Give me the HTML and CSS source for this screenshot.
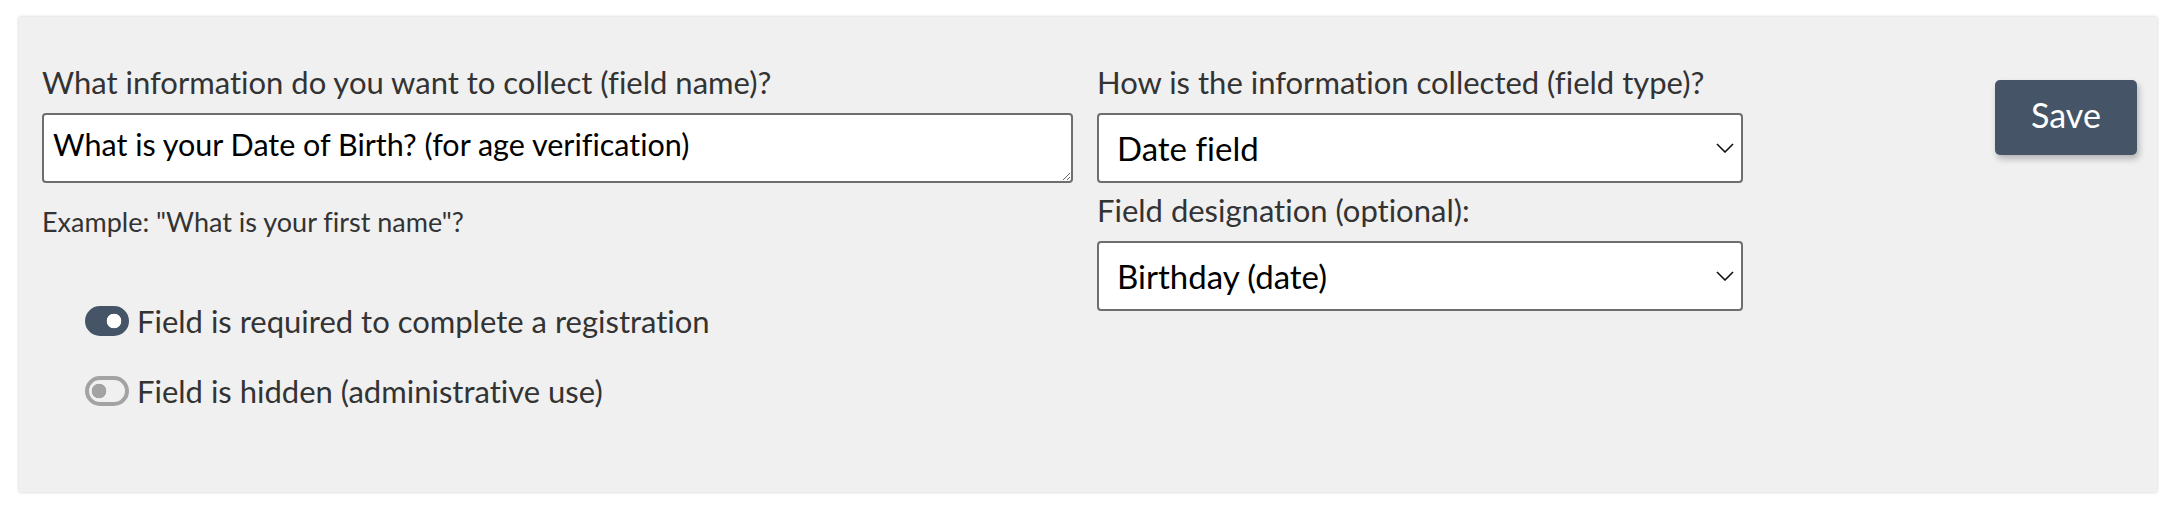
FILE: index.html
```html
<!DOCTYPE html>
<html lang="en">
<head>
    <meta charset="UTF-8">
    <meta name="viewport" content="width=device-width, initial-scale=1.0">
    <title>Registration field</title>
    <link rel="stylesheet" href="styles.css">
</head>
<body>
    <div class="page">
        <form class="field-editor">
            <div class="col col-name">
                <label class="field-label" for="field-name">What information do you want to collect (field name)?</label>
                <textarea id="field-name" class="field-input" rows="1">What is your Date of Birth? (for age verification)</textarea>
                <p class="hint">Example: "What is your first name"?</p>

                <div class="switches">
                    <label class="switch-row">
                        <input type="checkbox" class="switch" checked>
                        <span>Field is required to complete a registration</span>
                    </label>
                    <label class="switch-row">
                        <input type="checkbox" class="switch">
                        <span>Field is hidden (administrative use)</span>
                    </label>
                </div>
            </div>

            <div class="col col-type">
                <div class="group">
                    <label class="field-label" for="field-type">How is the information collected (field type)?</label>
                    <div class="select-wrap">
                        <select id="field-type" class="field-select">
                            <option>Date field</option>
                            <option>Text field</option>
                            <option>Number field</option>
                        </select>
                        <svg class="chevron" viewBox="0 0 18 10" width="18" height="10"><path d="M1 1 L9 9 L17 1"/></svg>
                    </div>
                </div>
                <div class="group">
                    <label class="field-label" for="field-designation">Field designation (optional):</label>
                    <div class="select-wrap">
                        <select id="field-designation" class="field-select">
                            <option>Birthday (date)</option>
                            <option>None</option>
                        </select>
                        <svg class="chevron" viewBox="0 0 18 10" width="18" height="10"><path d="M1 1 L9 9 L17 1"/></svg>
                    </div>
                </div>
            </div>

            <button type="button" class="save-btn">Save</button>
        </form>
    </div>
</body>
</html>
```
FILE: styles.css
```css
*, *::before, *::after {
    box-sizing: border-box;
}

body {
    margin: 0;
    background: #fff;
    color: #333;
    font-family: 'Lato', sans-serif;
    font-variant-ligatures: none;
}

.page {
    padding: 17px 17px 18px 19px;
}

/* grey card holding the whole editor row */
.field-editor {
    display: flex;
    align-items: flex-start;
    height: 475px;
    padding: 47px 20px 0 23px;
    background: #f0f0f0;
    box-shadow: 0 0 3px rgba(0, 0, 0, 0.22);
}

.col-name {
    width: 1031px;
}

.col-type {
    width: 646px;
    margin-left: 24px;
}

.field-label {
    display: block;
    margin-bottom: 12px;
    font-size: 31px;
    line-height: 1.2;
    color: #333;
}

.field-input {
    display: block;
    width: 100%;
    height: 70px;
    margin: 0;
    padding: 11px 9px 9px;
    border: 2px solid #6e6e6e;
    border-radius: 4px;
    background: #fff;
    color: #000;
    font: 30.5px/1.2 'Lato', sans-serif;
    font-variant-ligatures: none;
    resize: vertical;
}

.hint {
    margin: 23px 0 0;
    font-size: 27px;
    line-height: 1.2;
    color: #333;
}

.switches {
    margin-top: 64px;
    padding-left: 43px;
}

.switch-row {
    display: flex;
    align-items: center;
    gap: 8px;
    font-size: 31px;
    line-height: 1.2;
    color: #333;
    cursor: pointer;
}

.switch-row + .switch-row {
    margin-top: 33px;
}

/* toggle switch, knob drawn with a gradient */
.switch {
    -webkit-appearance: none;
    appearance: none;
    flex: none;
    width: 44px;
    height: 30px;
    margin: 0;
    border: 4px solid #a3a3a3;
    border-radius: 15px;
    background: radial-gradient(circle at 10px 50%, #a3a3a3 7px, transparent 7.6px);
    cursor: pointer;
}

.switch:checked {
    border-color: #455567;
    background: radial-gradient(circle at 25px 50%, #fff 7px, #455567 7.6px);
}

.group + .group {
    margin-top: 9px;
}

.select-wrap {
    position: relative;
}

.field-select {
    display: block;
    width: 100%;
    height: 70px;
    margin: 0;
    padding: 0 50px 0 18px;
    border: 2px solid #6e6e6e;
    border-radius: 4px;
    background: #fff;
    color: #000;
    font: 33px 'Lato', sans-serif;
    font-variant-ligatures: none;
    -webkit-appearance: none;
    appearance: none;
}

.chevron {
    position: absolute;
    top: 30px;
    right: 9px;
    fill: none;
    stroke: #111;
    stroke-width: 1.6;
    pointer-events: none;
}

.save-btn {
    width: 142px;
    height: 75px;
    margin: 16px 0 0 auto;
    padding: 0 0 6px;
    border: 0;
    border-radius: 5px;
    background: #455567;
    color: #fff;
    font: 34px/1 'Lato', sans-serif;
    box-shadow: 2px 4px 6px rgba(0, 0, 0, 0.25);
    cursor: pointer;
}
```
